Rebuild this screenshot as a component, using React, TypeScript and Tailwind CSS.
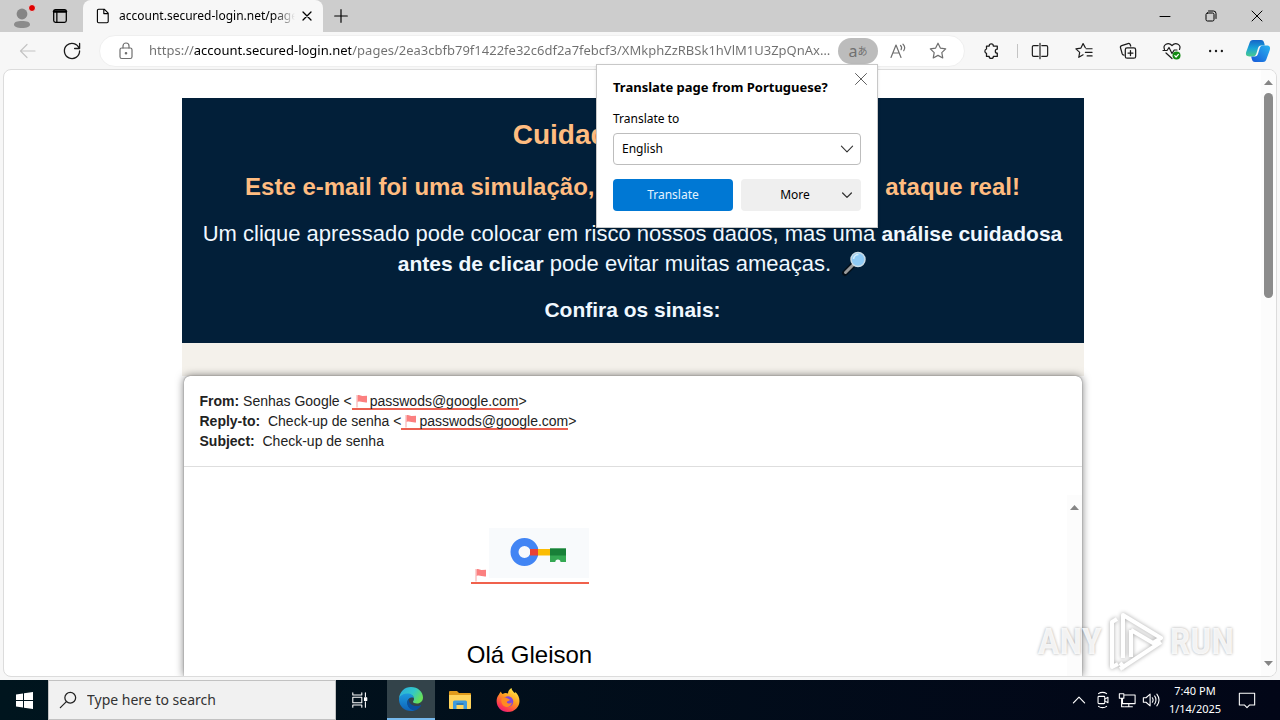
import type { ReactNode } from "react";

type IconProps = { size?: number; className?: string; width?: number; children: ReactNode };

function Icon({ size = 20, className = "", width = 1.2, children }: IconProps) {
  return (
    <svg
      width={size}
      height={size}
      viewBox="0 0 20 20"
      fill="none"
      stroke="currentColor"
      strokeWidth={width}
      strokeLinecap="round"
      strokeLinejoin="round"
      aria-hidden="true"
      className={`shrink-0 ${className}`}
    >
      {children}
    </svg>
  );
}

const star = "M10 2.2l2.35 4.9 5.35.75-3.9 3.75.95 5.35L10 14.4l-4.75 2.55.95-5.35-3.9-3.75 5.35-.75z";

function Flag() {
  return (
    <svg width="12" height="14" viewBox="0 0 12 14" className="ml-1 mr-0.5 inline-block align-[-2px]" aria-hidden="true">
      <path d="M1 1v12.5" stroke="#f9b4b4" strokeWidth="1.2" />
      <path d="M1.6 1.4c2-1 3.6.8 5 .6L11 1.7V8.4c-1.6.7-3-.5-4.6-.4-1.7-.6-3.2-.8-4.8-.1z" fill="#fb8080" />
    </svg>
  );
}

function MagnifierEmoji() {
  return (
    <svg width="26" height="26" viewBox="0 0 26 26" className="ml-1 inline-block align-[-6px]" aria-hidden="true">
      <path d="M4 22L13 13" stroke="#05101a" strokeWidth="6" strokeLinecap="round" />
      <path d="M4.5 21.5L12 14" stroke="#9a9a9a" strokeWidth="3" strokeLinecap="round" />
      <circle cx="17" cy="8.5" r="7" fill="#8fcaf5" stroke="#c9dbe6" strokeWidth="1.5" />
      <path d="M12.5 8a5 5 0 0 1 5-4.5" stroke="#d5eefc" strokeWidth="1.6" fill="none" />
    </svg>
  );
}

function TitleBar() {
  return (
    <header className="flex h-8 shrink-0 items-stretch bg-[#cdcdcd] text-black">
      <button aria-label="Profile" className="relative flex w-11 items-center justify-center pt-1">
        <svg width="18" height="20" viewBox="0 0 18 20" aria-hidden="true">
          <circle cx="9" cy="6" r="5.4" fill="#858585" />
          <path d="M1 16.5c0-2.500 3-3.500 8-3.500s8 1 8 3.500c0 2.200-3 3.500-8 3.500s-8-1.300-8-3.500z" fill="#8b8b8b" />
        </svg>
        <span className="absolute right-2 top-1 size-2 rounded-full border border-[#dcdcdc] bg-[#e00000]" />
      </button>
      <button aria-label="Tab actions" className="flex w-8 items-center justify-center">
        <Icon size={18} width={1.4}>
          <rect x="3" y="3" width="14" height="14" rx="2" />
          <path d="M3.5 5h13" strokeWidth="3" />
          <path d="M6.5 5v12" />
        </Icon>
      </button>
      <div className="ml-[7px] mr-0.5 flex w-60 items-center rounded-t-lg bg-[#f7f7f7] pl-3 pr-2">
        <Icon size={16} width={1.4}>
          <path d="M4.500 1.500h7l5 5V17a1.500 1.500 0 0 1-1.500 1.500H4.500A1.500 1.500 0 0 1 3 17V3a1.500 1.500 0 0 1 1.500-1.500zM11 2v5h5" />
        </Icon>
        <span className="ml-2 w-[176px] overflow-hidden whitespace-nowrap bg-linear-to-r from-black from-88% to-transparent bg-clip-text text-xs text-transparent">
          account.secured-login.net/pages
        </span>
        <button aria-label="Close tab" className="ml-auto">
          <Icon size={16} width={1.6}>
            <path d="M5 5l10 10M15 5L5 15" />
          </Icon>
        </button>
      </div>
      <button aria-label="New tab" className="flex w-8 items-center justify-center">
        <Icon size={18} width={1.3}>
          <path d="M10 3v14M3 10h14" />
        </Icon>
      </button>
      <div className="ml-auto flex">
        <button aria-label="Minimize" className="flex w-[46px] items-center justify-center">
          <Icon size={20} width={1}>
            <path d="M5 10.500h10" />
          </Icon>
        </button>
        <button aria-label="Restore" className="flex w-[46px] items-center justify-center">
          <Icon size={20} width={1}>
            <rect x="5" y="7" width="8" height="8" rx="1.5" />
            <path d="M7.500 5h5A2.500 2.500 0 0 1 15 7.500v5" />
          </Icon>
        </button>
        <button aria-label="Close" className="flex w-[46px] items-center justify-center">
          <Icon size={20} width={1}>
            <path d="M5 5l10 10M15 5L5 15" />
          </Icon>
        </button>
      </div>
    </header>
  );
}

function TranslatePopup() {
  return (
    <section
      aria-label="Translate"
      className="absolute right-0 top-full z-20 -mt-0.5 w-[282px] border border-[#c8c8c8] bg-white px-4 pb-4 pt-3 text-xs text-black shadow-sm"
    >
      <button aria-label="Dismiss" className="absolute right-1.5 top-1 text-[#606060]">
        <Icon size={20} width={1}>
          <path d="M4.500 4.500l11 11M15.500 4.500l-11 11" />
        </Icon>
      </button>
      <h2 className="text-[13px] leading-5 font-bold">Translate page from Portuguese?</h2>
      <label htmlFor="target" className="mt-3 block leading-5">
        Translate to
      </label>
      <div className="relative mt-1">
        <select
          id="target"
          defaultValue="English"
          className="h-8 w-full appearance-none rounded-sm border border-[#bdbdbd] bg-white px-2"
        >
          <option>English</option>
        </select>
        <Icon size={16} className="pointer-events-none absolute right-1.5 top-2 text-[#333]" width={1.4}>
          <path d="M3 6.500l7 7 7-7" />
        </Icon>
      </div>
      <div className="mt-3.5 grid grid-cols-2 gap-2">
        <button className="h-8 rounded-sm bg-[#0078d4] text-[#e4f3ff]">Translate</button>
        <button className="flex h-8 items-center rounded-sm bg-[#efefef] pr-1.5">
          <span className="flex-1 pl-2.5">More</span>
          <Icon size={16} width={1.6} className="text-[#333]">
            <path d="M4.500 7.500L10 13l5.500-5.500" />
          </Icon>
        </button>
      </div>
    </section>
  );
}

function Toolbar() {
  return (
    <div className="flex h-[37px] shrink-0 items-center text-[#1b1b1b]">
      <button aria-label="Back" className="ml-[18px] text-[#c4c4c4]">
        <Icon>
          <path d="M17 10H2.500M9 3.500L2.500 10 9 16.500" />
        </Icon>
      </button>
      <button aria-label="Refresh" className="ml-6">
        <Icon width={1.3}>
          <path d="M17.200 7.500A7.600 7.600 0 1 0 17.600 10M17.600 2.500v5h-5" />
        </Icon>
      </button>
      <div className="ml-[17px] flex h-8 min-w-0 flex-1 items-center rounded-full border border-[#efefef] bg-white pl-4 text-[#6f6f6f]">
        <Icon>
          <rect x="4" y="7" width="12" height="10.5" rx="1.8" />
          <path d="M7 7V5a3 3 0 0 1 6 0v2" />
          <circle cx="10" cy="12.3" r=".7" fill="currentColor" />
        </Icon>
        <input
          aria-label="Address"
          readOnly
          value="https://account.secured-login.net/pages/2ea3cbfb79f1422fe32c6df2a7febcf3/XMkphZzRBSk1hVlM1U3ZpQnAxWnRkTGxhdz09"
          className="ml-[13px] min-w-0 flex-1 text-ellipsis bg-[linear-gradient(90deg,#6f6f6f_45px,#000_45px,#000_202px,#6f6f6f_202px)] bg-clip-text text-[13px] text-transparent outline-none"
        />
        <div className="relative flex h-full items-center">
          <button aria-label="Translate page" className="flex h-6.5 w-10 items-center justify-center rounded-full bg-[#bcbcbc] text-[#707070]">
            <span className="text-base leading-none">a</span>
            <span className="font-['Noto_Sans_CJK_JP',sans-serif] text-[10px] leading-none">あ</span>
          </button>
          <TranslatePopup />
        </div>
        <button aria-label="Read aloud" className="ml-2.5">
          <Icon>
            <path d="M3 16.500L8 4l5 12.500M4.800 12h6.400M12.500 4.500c1.200 1 1.200 3 .6 4.200M15 3.200c1.900 1.800 1.900 4.600.7 6.500" />
          </Icon>
        </button>
        <button aria-label="Add to favorites" className="ml-5 mr-4">
          <Icon>
            <path d={star} />
          </Icon>
        </button>
      </div>
      <div className="ml-1 flex items-center">
        <button aria-label="Extensions" className="flex w-11 justify-center">
          <Icon width={1.4} size={18}>
            <path d="M5 4.500h3a2.300 2.300 0 0 1 4.600 0H17V8a2.200 2.200 0 0 0 0 4.400V16h-4.400a2.300 2.300 0 0 1-4.600 0H5v-3.400a2.500 2.500 0 0 1 0-4.800z" />
          </Icon>
        </button>
        <span className="ml-1 h-3.5 w-px bg-[#c4c4c4]" />
        <button aria-label="Split screen" className="flex w-11 justify-center">
          <Icon width={1.3} size={18}>
            <path d="M8 4H3A1.500 1.500 0 0 0 1.500 5.500v9A1.500 1.500 0 0 0 3 16h5M12 4h5a1.500 1.500 0 0 1 1.500 1.500v9A1.500 1.500 0 0 1 17 16h-5M10 1.500v17" />
          </Icon>
        </button>
        <button aria-label="Favorites" className="flex w-11 justify-center">
          <Icon width={1.3} size={18}>
            <path d="M11.500 6.500L9 1.800 6.600 6.800l-5.600.8 4.200 3.900-1 5.500L9 14.200M12.500 7.500H19M11.500 11.500H19M13.500 15.500H19" />
          </Icon>
        </button>
        <button aria-label="Collections" className="flex w-11 justify-center">
          <Icon width={1.4} size={18}>
            <path d="M5.500 14.500A2.500 2.500 0 0 1 3.500 13L1.700 6.500A2 2 0 0 1 3 4l7-2.300A2 2 0 0 1 12.500 3L13 4.500" />
            <rect x="7" y="6.5" width="11.500" height="11.5" rx="2" />
            <path d="M12.750 9.500v5.500M10 12.250h5.500" />
          </Icon>
        </button>
        <button aria-label="Browser essentials" className="flex w-11 justify-center">
          <Icon width={1.2} size={20}>
            <path d="M2.500 8.500C.5 4 6 .5 10 4.500c4-4 9.500-.5 7.500 4M1 9.500h4l2-3 3 6 2.200-3.500H15M4 12l6 5.500" />
            <circle cx="14.500" cy="14.500" r="4" fill="#138a13" stroke="none" />
            <path d="M12.800 14.700l1.300 1.300 2.300-2.600" stroke="#fff" />
          </Icon>
        </button>
        <button aria-label="Settings and more" className="flex w-11 justify-center">
          <Icon size={18}>
            <g fill="currentColor" stroke="none">
              <circle cx="3.500" cy="10" r="1.3" />
              <circle cx="10" cy="10" r="1.3" />
              <circle cx="16.500" cy="10" r="1.3" />
            </g>
          </Icon>
        </button>
        <button aria-label="Copilot" className="ml-[7px] mr-[9px] flex w-[26px] justify-center">
          <svg width="26" height="24" viewBox="0 0 26 24" aria-hidden="true">
            <defs>
              <linearGradient id="cpA" x1="0" y1="0" x2="0" y2="1">
                <stop offset="0" stopColor="#1565c8" />
                <stop offset=".5" stopColor="#19a3d8" />
                <stop offset="1" stopColor="#4bcb8c" />
              </linearGradient>
              <linearGradient id="cpB" x1="1" y1="0" x2="0" y2="1">
                <stop offset="0" stopColor="#2ab4f0" />
                <stop offset="1" stopColor="#1557d8" />
              </linearGradient>
            </defs>
            <path d="M8 1h8c2 0 2.600 1 3.200 3l.6 2.500h-3.500c-2 0-2.800 1-3.400 3l-1.500 5c-.6 2-1.600 3-3.500 3H4.500c-3.500 0-4-2-3.300-4.400L4.500 4C5.100 2 6 1 8 1z" fill="url(#cpA)" />
            <path d="M18 23h-8c-2 0-2.600-1-3.200-3l-.6-2.500h3.500c2 0 2.800-1 3.400-3l1.500-5c.6-2 1.600-3 3.500-3h3.400c3.500 0 4 2 3.300 4.400L21.500 20c-.6 2-1.500 3-3.500 3z" fill="url(#cpB)" />
          </svg>
        </button>
      </div>
    </div>
  );
}

function Arrow({ down = false }: { down?: boolean }) {
  return (
    <svg width="9" height="5" viewBox="0 0 9 5" aria-hidden="true" className="shrink-0">
      <path d={down ? "M0 0h9L4.500 5z" : "M0 5h9L4.500 0z"} fill="#858585" />
    </svg>
  );
}

function Suspicious({ children }: { children: ReactNode }) {
  return (
    <span className="inline-block h-[18px] border-b-2 border-[#ec6152] leading-[18px]">
      <Flag />
      {children}
    </span>
  );
}

function EmailCard() {
  return (
    <article className="mx-0.5 flex min-h-0 flex-1 flex-col rounded-t-md bg-white shadow-[0_0_8px_rgba(0,0,0,0.55),0_0_1px_#555]">
      <div className="border-b border-[#dedede] px-4 pb-[15px] pt-[15px] text-sm leading-5 text-[#222]">
        <p className="h-5 whitespace-nowrap">
          <b>From:</b> Senhas Google &lt;<Suspicious>passwods@google.com</Suspicious>&gt;
        </p>
        <p className="h-5 whitespace-nowrap">
          <b>Reply-to:</b>&nbsp; Check-up de senha &lt;<Suspicious>passwods@google.com</Suspicious>&gt;
        </p>
        <p className="h-5">
          <b>Subject:</b>&nbsp; Check-up de senha
        </p>
      </div>
      <div className="flex min-h-0 flex-1 overflow-hidden">
        <div className="flex-1 pt-[61px]">
          <div className="flex max-w-[692px] flex-col items-center">
            <div className="flex items-end border-b-2 border-[#f0614c]">
              <Flag />
              <svg width="100" height="50" viewBox="0 0 100 50" role="img" aria-label="Key" className="mb-1">
                <rect width="100" height="50" fill="#f8fafc" />
                <circle cx="35.500" cy="24" r="10" fill="none" stroke="#4285f4" strokeWidth="8" />
                <path d="M49 21h12v6.500H49z" fill="#fbbc04" />
                <path d="M41 21h8v6.500h-8z" fill="#ea4335" />
                <path d="M61 20.500h16V34h-5.500a2.600 2.600 0 0 0-5.200 0H61z" fill="#34a853" />
                <path d="M61 20.500h16v7H61z" fill="#188038" />
              </svg>
            </div>
            <h2 className="mt-[55px] whitespace-nowrap text-2xl leading-8 text-black">Olá Gleison</h2>
          </div>
        </div>
        <div className="mt-7 flex w-[15px] flex-col items-center bg-[#fcfcfc] pt-2.5">
          <Arrow />
        </div>
      </div>
    </article>
  );
}

function Watermark() {
  return (
    <div className="pointer-events-none absolute -bottom-0.5 right-[42px] flex items-center gap-1 font-['Liberation_Sans_Narrow','Roboto_Condensed',sans-serif] text-[37px] leading-[72px] font-bold text-white/85 [text-shadow:0_0_3px_rgba(0,0,0,0.35)]">
      <span>ANY</span>
      <svg width="60" height="64" viewBox="0 0 60 64" fill="none" strokeLinejoin="round" className="[filter:drop-shadow(0_0_2px_rgba(0,0,0,0.35))]" aria-hidden="true">
        <path d="M11 9L6 12v45l6-3M17 48V5l38 23-8 5-22-13M25 20v27M14 59l41-27M14 53l5 5" stroke="#fff" strokeWidth="4" />
      </svg>
      <span>RUN</span>
    </div>
  );
}

function Page() {
  return (
    <div className="relative mx-[3px] mb-[3px] flex min-h-0 flex-1 overflow-hidden rounded-lg border border-[#dcdcdc] bg-white">
      <main className="flex min-w-0 flex-1 flex-col overflow-hidden pt-7 font-['Liberation_Sans',Arial,sans-serif]">
        <div className="mx-auto flex min-h-0 w-full max-w-[902px] flex-1 flex-col">
          <div className="h-[245px] shrink-0 bg-[#021f39] px-5 pt-[21px] text-center text-[22px] leading-[30px] text-[#f0f8ff]">
            <h1 className="text-[28px] leading-8 font-bold text-[#ffbc80]">Cuidado, Gleison!</h1>
            <h2 className="mt-5 text-2xl leading-8 font-bold text-[#ffbc80]">
              Este e-mail foi uma simulação, mas poderia ter sido um ataque real!
            </h2>
            <p className="mt-4">
              Um clique apressado pode colocar em risco nossos dados, mas uma{" "}
              <b className="text-[21px]">análise cuidadosa antes de clicar</b> pode evitar muitas ameaças. <MagnifierEmoji />
            </p>
            <p className="mt-4 text-[21px] font-bold">Confira os sinais:</p>
          </div>
          <div className="h-[33px] shrink-0 bg-[#f4f1eb]" />
          <EmailCard />
        </div>
      </main>
      <div className="flex w-[15px] shrink-0 flex-col items-center bg-[#fcfcfc] pb-2.5 pt-2.5">
        <Arrow />
        <div className="mt-2 h-[205px] w-[9px] rounded-full bg-[#8b8b8b]" />
        <div className="mt-auto">
          <Arrow down />
        </div>
      </div>
      <Watermark />
    </div>
  );
}

function EdgeLogo() {
  return (
    <svg width="24" height="24" viewBox="0 0 24 24" aria-hidden="true">
      <defs>
        <linearGradient id="edA" x1="0" y1="0" x2="1" y2=".5">
          <stop offset="0" stopColor="#2aa9e0" />
          <stop offset=".6" stopColor="#32c8c8" />
          <stop offset="1" stopColor="#66e05a" />
        </linearGradient>
        <linearGradient id="edB" x1="0" y1="0" x2="0" y2="1">
          <stop offset="0" stopColor="#1d9ade" />
          <stop offset="1" stopColor="#0e62b8" />
        </linearGradient>
      </defs>
      <path d="M0 11.500C.6 4.800 5.500 0 12 0c7 0 12 5 12 10.500 0 3.500-2.600 6-6 6-2.500 0-4-.8-4-1.700 0-.6 1-1 1-2.800 0-2.500-2.500-5-6-5-4 0-7.500 2-9 4.500z" fill="url(#edA)" />
      <path d="M0 11.500C1.500 8.500 4.600 6.600 8.500 6.600c3.500 0 6 2 6.400 4.400-3.600-1.500-6.500 1-6.500 4.500 0 4 3.600 7.500 8 8.000C14.500 24 13.300 24 12 24 5 24-.4 18.500 0 11.500z" fill="url(#edB)" />
      <path d="M9.500 12C6 17 10 23.500 16 23.400c2.500-.8 4.800-2.600 6-4.700.3-.5-.1-.8-.6-.5C16 20.500 10 18 9.500 12z" fill="#0a4f9e" />
    </svg>
  );
}

function FirefoxLogo() {
  return (
    <svg width="24" height="24" viewBox="0 0 24 24" aria-hidden="true">
      <defs>
        <linearGradient id="ffA" x1=".8" y1="0" x2=".2" y2="1">
          <stop offset="0" stopColor="#fff04a" />
          <stop offset=".45" stopColor="#ff9a1f" />
          <stop offset=".8" stopColor="#ff3c4e" />
          <stop offset="1" stopColor="#e31587" />
        </linearGradient>
      </defs>
      <path d="M5 3.500c.2 1.400.8 2 1.600 2.400C9 4.500 11 5 12 5.500 12 3 13.500 1 15.500 0c.3 2.500 2 3.800 3.600 5.200.2-.6.1-1 0-1.500C22 6 23.500 9.500 23.500 13c0 6-5 11-11.500 11S.6 19.500.6 13c0-3 1-5 2.400-6.500C3.300 5.400 4 4.300 5 3.500z" fill="url(#ffA)" />
      <circle cx="12" cy="13.500" r="5.3" fill="#8048d8" />
      <path d="M5.500 11c2-2.500 5-1.500 6.500-.3 1.500.2 2 .8 1.600 1.500-.6.8-2.600.6-2.800 2.200 1 1.600 3.500 1.300 5.200.2-.5 3-3 4.600-5.500 4.300C7 18.400 4.600 15 5.500 11z" fill="#ff8a22" />
    </svg>
  );
}

function ExplorerLogo() {
  return (
    <svg width="22" height="20" viewBox="0 0 22 20" aria-hidden="true">
      <path d="M0 2a1 1 0 0 1 1-1h7l2 2h11a1 1 0 0 1 1 1v4H0z" fill="#e09b1b" />
      <path d="M0 5h22v13a1 1 0 0 1-1 1H1a1 1 0 0 1-1-1z" fill="#ffd45c" />
      <path d="M4 19v-7a1.500 1.500 0 0 1 1.500-1.500h11A1.500 1.500 0 0 1 18 12v7h-3.500v-4h-7v4z" fill="#3f9bdc" />
      <path d="M7.500 13h7v2h-7z" fill="#2d7cb8" />
    </svg>
  );
}

function Taskbar() {
  return (
    <footer className="flex h-10 shrink-0 items-stretch bg-linear-to-r from-[#00151e] to-[#020617] text-white">
      <button aria-label="Start" className="flex w-12 items-center justify-center">
        <svg width="17" height="17" viewBox="0 0 17 17" fill="#fff" aria-hidden="true">
          <path d="M0 2.400L7 1.400V8H0zM8 1.300L17 0v8H8zM0 9h7v6.600L0 14.600zM8 9h9v8l-9-1.300z" />
        </svg>
      </button>
      <label className="flex w-72 items-center border border-[#c2c2c2] bg-[#f1f1f1] pl-2.5 text-[#222]">
        <Icon size={18} width={1.4}>
          <circle cx="12.500" cy="7.500" r="6" />
          <path d="M8.200 11.800L1.500 18.500" />
        </Icon>
        <input
          aria-label="Search"
          placeholder="Type here to search"
          className="ml-2.5 min-w-0 flex-1 bg-transparent text-sm outline-none placeholder:text-[#333]"
        />
      </label>
      <button aria-label="Task View" className="mr-[3px] flex w-12 items-center justify-center">
        <Icon size={18} width={1.2}>
          <path d="M2 2v2.500h10V2M2 18v-2.500h10V18M2 7h10v6H2zM16 2v4M16 12v6" />
          <path d="M15 7.500h2.500v3H15z" fill="currentColor" />
        </Icon>
      </button>
      <button aria-label="Microsoft Edge" className="flex w-12 items-center justify-center border-b-2 border-[#76b9ed] bg-[#33434a]">
        <EdgeLogo />
      </button>
      <button aria-label="File Explorer" className="flex w-[49px] items-center justify-center">
        <ExplorerLogo />
      </button>
      <button aria-label="Firefox" className="flex w-12 items-center justify-center">
        <FirefoxLogo />
      </button>
      <div className="ml-auto flex items-center">
        <button aria-label="Show hidden icons" className="flex w-6 justify-center">
          <Icon size={16} width={1.5}>
            <path d="M3 13.500l7-7 7 7" />
          </Icon>
        </button>
        <button aria-label="Meet Now" className="flex w-6 justify-center">
          <Icon size={18} width={1.2}>
            <rect x="4.500" y="6" width="7.500" height="8" rx="1" />
            <path d="M12 9l3.500-2v6L12 11M5 3c2.500-2 6.500-2 9 0M5 17c2.500 2 6.500 2 9 0" />
          </Icon>
        </button>
        <button aria-label="Network" className="flex w-6 justify-center">
          <Icon size={18} width={1.2}>
            <path d="M7.500 4.500H19V14H5V9M12 14v3M8 17.500h8M1.500 3h5v5h-5zM4 8v9.500h3" />
          </Icon>
        </button>
        <button aria-label="Volume" className="flex w-6 justify-center">
          <Icon size={18} width={1.2}>
            <path d="M1.500 7.500h3L9 3.500v13l-4.500-4h-3zM11.500 7.500c1 1.500 1 3.500 0 5M14 5.500c2 2.500 2 6.500 0 9M16.500 3.500c3 4 3 9 0 13" />
          </Icon>
        </button>
        <div className="flex w-16 flex-col items-center whitespace-nowrap text-[11px] leading-[18px]">
          <span>7:40 PM</span>
          <span>1/14/2025</span>
        </div>
        <button aria-label="Notifications" className="mr-3.5 flex w-[39px] justify-center">
          <Icon size={18} width={1.2}>
            <path d="M1.500 2.500h17v13h-5.500L10 18.500l-3-3H1.500z" />
          </Icon>
        </button>
      </div>
    </footer>
  );
}

export default function App() {
  return (
    <div className="flex h-screen flex-col overflow-hidden bg-[#f7f7f7] font-['Noto_Sans','Open_Sans',sans-serif]">
      <TitleBar />
      <Toolbar />
      <Page />
      <Taskbar />
    </div>
  );
}
